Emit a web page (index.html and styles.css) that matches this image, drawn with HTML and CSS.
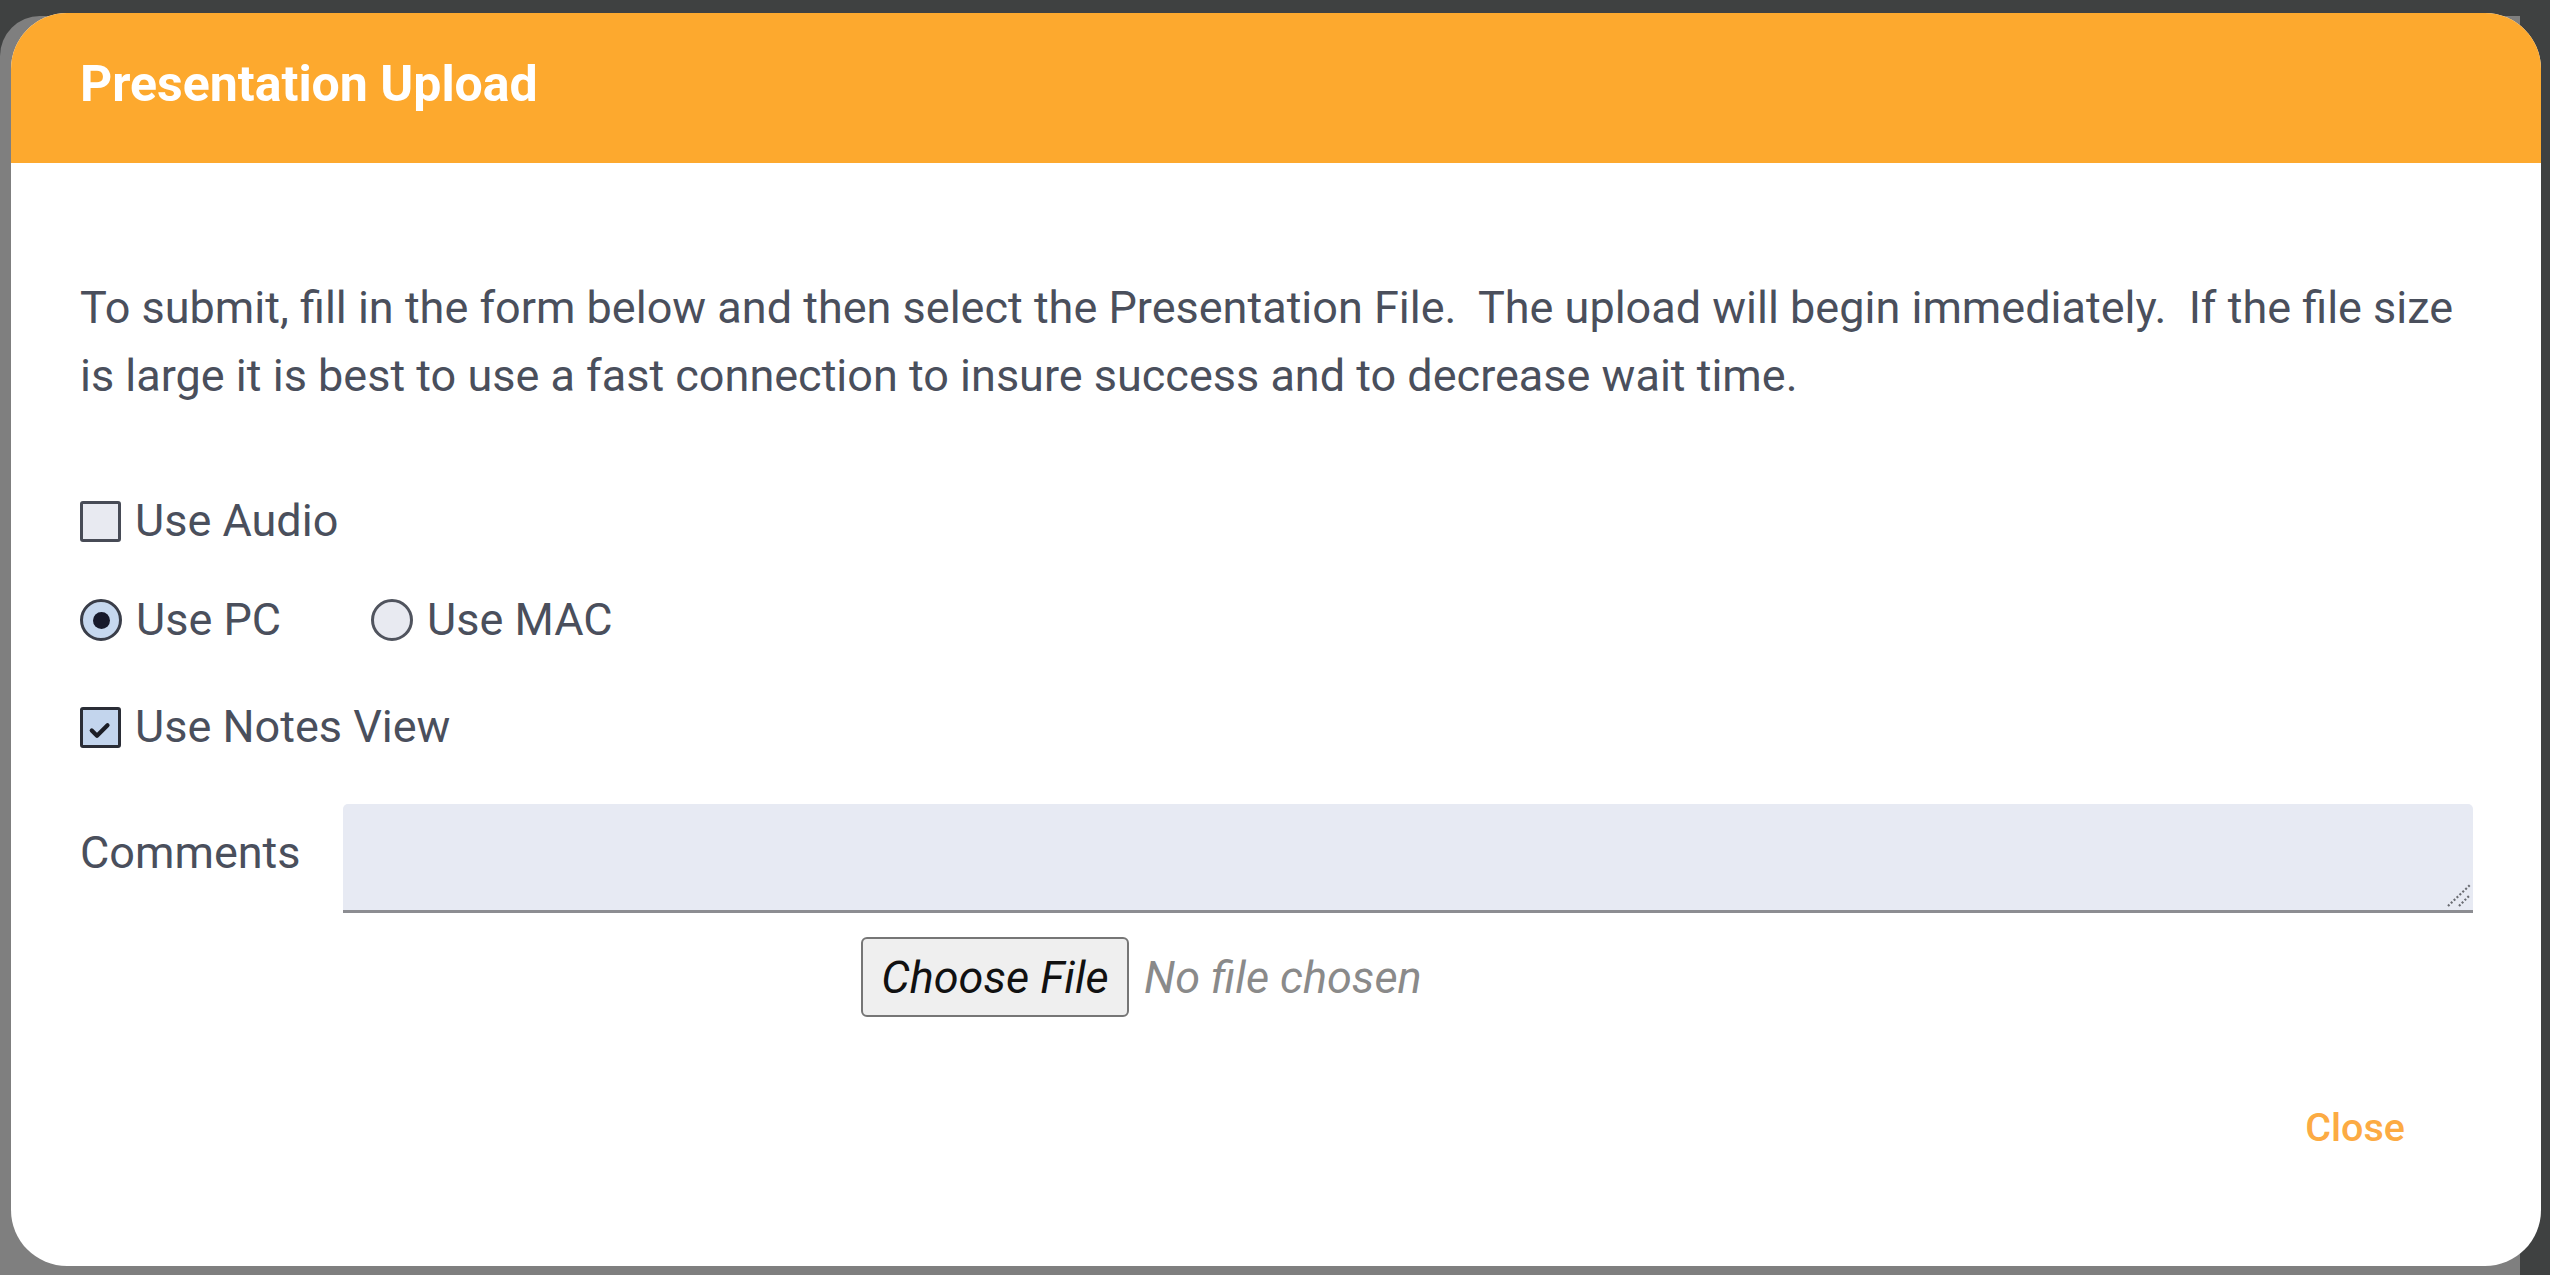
FILE: index.html
```html
<!DOCTYPE html>
<html lang="en">
<head>
<meta charset="utf-8">
<title>Presentation Upload</title>
<link rel="stylesheet" href="styles.css">
</head>
<body>
<div class="underlay"></div>
<div class="modal">
  <div class="modal-header">
    <h1 class="modal-title">Presentation Upload</h1>
  </div>
  <div class="modal-body">
    <p class="intro">To submit, fill in the form below and then select the Presentation File.&nbsp; The upload will begin immediately.&nbsp; If the file size is large it is best to use a fast connection to insure success and to decrease wait time.</p>

    <label class="row row-audio">
      <span class="check"></span>
      <span class="label-text">Use Audio</span>
    </label>

    <div class="row row-os">
      <label class="opt">
        <span class="radio radio-on"></span>
        <span class="label-text">Use PC</span>
      </label>
      <label class="opt opt-mac">
        <span class="radio"></span>
        <span class="label-text">Use MAC</span>
      </label>
    </div>

    <label class="row row-notes">
      <span class="check check-on">
        <svg viewBox="0 0 20 20" width="30" height="30"><path d="M4.5 11 L8 14.5 L15 7.5" fill="none" stroke="#1b1d26" stroke-width="2.8" stroke-linecap="round" stroke-linejoin="round"/></svg>
      </span>
      <span class="label-text">Use Notes View</span>
    </label>

    <div class="comments">
      <span class="comments-label">Comments</span>
      <div class="textarea-wrap">
        <textarea class="comments-input"></textarea>
        <svg class="grip" viewBox="0 0 26 24" width="26" height="24">
          <path d="M2 22 L24 1" stroke="#6a6c72" stroke-width="2.2" stroke-dasharray="2 2"/>
          <path d="M13 22 L24 11" stroke="#6a6c72" stroke-width="2.2" stroke-dasharray="2 2"/>
        </svg>
      </div>
    </div>

    <div class="file-row">
      <button class="file-btn" type="button">Choose File</button>
      <span class="file-status">No file chosen</span>
    </div>

    <div class="footer">
      <span class="close-btn">Close</span>
    </div>
  </div>
</div>
</body>
</html>
```

FILE: styles.css
```css
html, body {
  margin: 0;
  padding: 0;
}

body {
  width: 2550px;
  height: 1275px;
  overflow: hidden;
  background: #3f4141;
  font-family: Roboto, "Noto Sans", sans-serif;
  position: relative;
}

.underlay {
  position: absolute;
  left: 0;
  top: 16px;
  width: 2520px;
  height: 1259px;
  background: #7f7f7f;
  border-top-left-radius: 40px;
}

.modal {
  position: absolute;
  left: 11px;
  top: 13px;
  width: 2530px;
  height: 1253px;
  background: #ffffff;
  border-radius: 56px;
  overflow: hidden;
  display: flex;
  flex-direction: column;
}

.modal-header {
  height: 150px;
  flex: none;
  background: #fda92e;
  display: flex;
  align-items: center;
  padding: 0 69px 9px;
  box-sizing: border-box;
}

.modal-title {
  margin: 0;
  color: #ffffff;
  font-size: 50px;
  line-height: 1;
  font-weight: 700;
}

.modal-body {
  padding: 111px 68px 0 69px;
  color: #4a4f5c;
  font-size: 45px;
  display: flex;
  flex-direction: column;
}

.intro {
  margin: 0;
  line-height: 68px;
  max-width: 2410px;
}

.row {
  display: flex;
  align-items: center;
  height: 50px;
  line-height: 50px;
}

.row-audio { margin-top: 86px; }
.row-os { margin-top: 49px; }
.row-notes { margin-top: 57px; }

.opt {
  display: flex;
  align-items: center;
}

.opt-mac { margin-left: 90px; }

.label-text {
  margin-left: 14px;
}

.check {
  width: 41px;
  height: 41px;
  box-sizing: border-box;
  border: 3px solid #474b56;
  border-radius: 3px;
  background: #e8eaf1;
  display: flex;
  align-items: center;
  justify-content: center;
  flex: none;
}

.check-on {
  background: #c3d5ed;
  border-color: #2a2d36;
}

.check-on svg {
  width: 30px;
  height: 30px;
  margin-top: 4px;
  margin-left: -2px;
}

.radio {
  width: 42px;
  height: 42px;
  box-sizing: border-box;
  border: 3px solid #50545e;
  border-radius: 50%;
  background: #e8eaf1;
  flex: none;
  display: flex;
  align-items: center;
  justify-content: center;
}

.radio-on {
  border-color: #3a3e49;
  background: #c6d8ef;
}

.radio-on::after {
  content: "";
  width: 17px;
  height: 17px;
  border-radius: 50%;
  background: #171a2c;
}

.comments {
  display: flex;
  align-items: flex-start;
  margin-top: 52px;
}

.comments-label {
  width: 263px;
  flex: none;
  line-height: 50px;
  margin-top: 24px;
}

.textarea-wrap {
  flex: 1;
  position: relative;
  height: 109px;
}

.comments-input {
  display: block;
  width: 100%;
  height: 109px;
  box-sizing: border-box;
  margin: 0;
  border: none;
  border-bottom: 3px solid #8c8d92;
  border-radius: 5px 5px 0 0;
  background: #e7eaf3;
  resize: none;
  font: inherit;
  outline: none;
}

.grip {
  position: absolute;
  right: 1px;
  bottom: 5px;
}

.file-row {
  display: flex;
  align-items: center;
  margin-top: 24px;
  padding-left: 781px;
}

.file-btn {
  width: 268px;
  height: 80px;
  box-sizing: border-box;
  border: 2px solid #767676;
  border-radius: 6px;
  background: #efefef;
  color: #111111;
  font-family: Roboto, "Noto Sans", sans-serif;
  font-size: 45px;
  font-style: italic;
  padding: 0;
}

.file-status {
  margin-left: 15px;
  color: #8a8a8a;
  font-style: italic;
}

.footer {
  display: flex;
  justify-content: flex-end;
  margin-top: 88px;
  padding-right: 68px;
}

.close-btn {
  color: #fcab43;
  font-size: 39.5px;
  font-weight: 500;
  line-height: 46px;
}
```
